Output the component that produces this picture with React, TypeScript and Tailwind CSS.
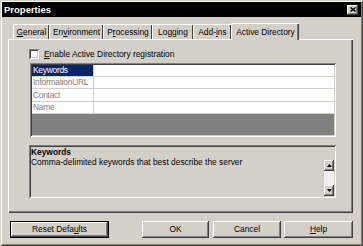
import React from "react";

const raised =
  "shadow-[inset_-1px_-1px_#404040,inset_1px_1px_#ffffff,inset_-2px_-2px_#808080,inset_2px_2px_#d4d0c8]";
const sunken =
  "shadow-[inset_1px_1px_#808080,inset_-1px_-1px_#ffffff,inset_2px_2px_#404040,inset_-2px_-2px_#d4d0c8]";

function U({ children }: { children: React.ReactNode }) {
  return <span className="underline underline-offset-[1px]">{children}</span>;
}

const tabs: { label: React.ReactNode; w: string }[] = [
  { label: <><U>G</U>eneral</>, w: "w-[36px]" },
  { label: <>En<U>v</U>ironment</>, w: "w-[54px]" },
  { label: <>P<U>r</U>ocessing</>, w: "w-[49px]" },
  { label: <>Logging</>, w: "w-[41px]" },
  { label: <>Add-<U>i</U>ns</>, w: "w-[38px]" },
];

const rows = [
  { name: "Keywords", h: "h-[12px]", selected: true },
  { name: "InformationURL", h: "h-[12px]" },
  { name: "Contact", h: "h-[13px]" },
  { name: "Name", h: "h-[12px]" },
];

function Arrow({ up }: { up?: boolean }) {
  return (
    <div className={`w-[10px] h-[11px] bg-[#d4d0c8] flex items-center justify-center ${raised}`}>
      <svg width="5" height="3" viewBox="0 0 5 3">
        <path d={up ? "M2.5 0 L5 3 L0 3 Z" : "M0 0 L5 0 L2.5 3 Z"} fill="#000" />
      </svg>
    </div>
  );
}

function Btn({ children, w, def }: { children: React.ReactNode; w: string; def?: boolean }) {
  return (
    <div
      className={`${w} h-[17px] flex items-center justify-center text-black ${
        def
          ? "shadow-[inset_0_0_0_1px_#000,inset_-2px_-2px_#404040,inset_2px_2px_#ffffff,inset_-3px_-3px_#808080]"
          : raised
      }`}
    >
      {children}
    </div>
  );
}

export default function App() {
  return (
    <div
      className="w-[363px] h-[246px] bg-[#d4d0c8] p-[2px] flex flex-col text-[8.4px] leading-none text-black font-['Liberation_Sans',Arial,sans-serif] shadow-[inset_1px_1px_#d4d0c8,inset_-1px_-1px_#404040,inset_2px_2px_#ffffff,inset_-2px_-2px_#808080] overflow-hidden"
    >
      {/* title bar */}
      <div className="h-[15px] bg-black flex items-center justify-between pl-[2px] pr-[3px]">
        <span className="text-white font-bold text-[9.5px]">Properties</span>
        <div className={`w-[11px] h-[10px] bg-[#d4d0c8] flex items-center justify-center ${raised}`}>
          <svg width="6" height="5" viewBox="0 0 6 5">
            <path d="M0.5 0.5 L5.5 4.5 M5.5 0.5 L0.5 4.5" stroke="#000" strokeWidth="1.4" />
          </svg>
        </div>
      </div>

      <div className="px-[6px] pt-[5px]">
        {/* tabs */}
        <div className="flex items-end h-[17px] pl-[5px]">
          {tabs.map((t, i) => (
            <div
              key={i}
              className={`${t.w} h-[15px] flex items-center justify-center border-t border-l border-white rounded-tl-[2px] shadow-[inset_-1px_0_#404040]`}
            >
              {t.label}
            </div>
          ))}
          <div className="w-[68px] h-[17px] relative z-10 -mb-px bg-[#d4d0c8] flex items-center justify-center border-t border-l border-white rounded-tl-[2px] shadow-[inset_-1px_0_#404040,inset_-2px_0_#808080]">
            Active Directory
          </div>
        </div>

        {/* tab page */}
        <div className="w-[345px] h-[174px] border-t border-l border-white shadow-[inset_-1px_-1px_#404040,inset_-2px_-2px_#808080] pl-[20px] pt-[9px] flex flex-col">
          <div className="flex items-center h-[10px]">
            <div className={`w-[10px] h-[10px] bg-white ${sunken}`} />
            <span className="ml-[5px]">
              <U>E</U>nable Active Directory registration
            </span>
          </div>

          {/* property grid */}
          <div className={`ml-px mt-[4px] w-[306px] h-[74px] bg-[#808080] p-[2px] flex flex-col ${sunken}`}>
            {rows.map((r) => (
              <div key={r.name} className={`${r.h} flex border-b border-[#d4d0c8] bg-white`}>
                <div
                  className={`w-[62px] shrink-0 overflow-hidden whitespace-nowrap tracking-[-0.25px] border-r border-[#d4d0c8] flex items-center pl-px ${
                    r.selected ? "bg-[#0a246a] text-white" : "text-[#808080]"
                  }`}
                >
                  {r.name}
                </div>
                <div className="flex-1" />
              </div>
            ))}
          </div>

          {/* description */}
          <div className={`mt-[8px] w-[307px] h-[53px] pl-[2px] pr-[2px] pt-[3px] flex flex-col ${sunken}`}>
            <div className="font-bold h-[8px] flex items-center">Keywords</div>
            <div className="flex flex-1">
              <div className="flex-1 pt-[2px]">Comma-delimited keywords that best describe the server</div>
              <div className="w-[10px] mt-[4px] mb-[2px] flex flex-col bg-[#f0efeb]">
                <Arrow up />
                <div className="flex-1" />
                <Arrow />
              </div>
            </div>
          </div>
        </div>
      </div>

      {/* buttons */}
      <div className="mt-[8px] flex pl-[8px]">
        <Btn w="w-[99px]" def>
          Reset Defa<U>u</U>lts
        </Btn>
        <div className="w-[33px]" />
        <Btn w="w-[67px]">OK</Btn>
        <div className="w-[4px]" />
        <Btn w="w-[68px]">Cancel</Btn>
        <div className="w-[3px]" />
        <Btn w="w-[69px]">
          <U>H</U>elp
        </Btn>
      </div>
    </div>
  );
}
